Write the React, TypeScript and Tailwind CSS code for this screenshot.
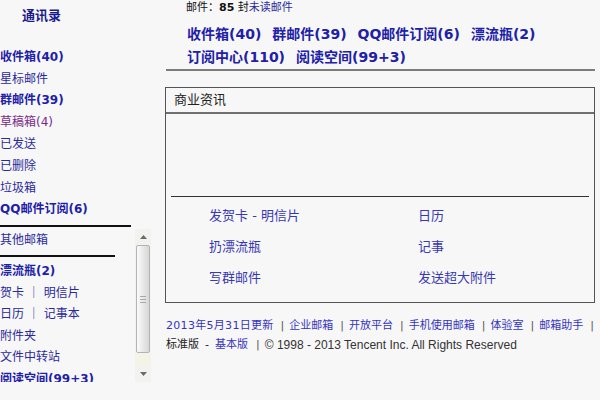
import React from "react";

const sideTop = [
  { label: "收件箱(40)", bold: true },
  { label: "星标邮件" },
  { label: "群邮件(39)", bold: true },
  { label: "草稿箱(4)", visited: true },
  { label: "已发送" },
  { label: "已删除" },
  { label: "垃圾箱" },
  { label: "QQ邮件订阅(6)", bold: true },
];

const sideBottom = [
  { label: "漂流瓶(2)", bold: true },
  { label: "贺卡 ｜ 明信片" },
  { label: "日历 ｜ 记事本" },
  { label: "附件夹" },
  { label: "文件中转站" },
  { label: "阅读空间(99+3)", bold: true },
];

const quickLinks = [
  ["发贺卡 - 明信片", "日历"],
  ["扔漂流瓶", "记事"],
  ["写群邮件", "发送超大附件"],
];

const footerLinks = ["企业邮箱", "开放平台", "手机使用邮箱", "体验室", "邮箱助手", "自助查询"];

function SideItem({ label, bold, visited }: { label: string; bold?: boolean; visited?: boolean }) {
  return (
    <div
      className={`flex items-center whitespace-nowrap text-[12px] ${
        bold ? "font-bold text-[#2020a8]" : visited ? "text-[#7a2a8a]" : "text-[#2a2a9c]"
      }`}
    >
      {label}
    </div>
  );
}

function Scrollbar() {
  return (
    <div className="ml-[2px] w-[16px] flex flex-col bg-[#f2f2ee]">
      <div className="h-[16px] flex items-center justify-center">
        <svg width="7" height="4" viewBox="0 0 7 4">
          <path d="M0 4 L3.5 0 L7 4 Z" fill="#6a6a6a" />
        </svg>
      </div>
      <div className="h-[108px] mx-[1px] rounded-[2px] border border-[#b4b4b4] bg-gradient-to-r from-[#fbfbfb] to-[#d6d6d6] flex flex-col items-center justify-center gap-[2px]">
        <div className="w-[6px] h-px bg-[#a8a8a8]" />
        <div className="w-[6px] h-px bg-[#a8a8a8]" />
        <div className="w-[6px] h-px bg-[#a8a8a8]" />
      </div>
      <div className="flex-1 bg-[#f4f4e6]" />
      <div className="h-[16px] flex items-center justify-center">
        <svg width="7" height="4" viewBox="0 0 7 4">
          <path d="M0 0 L3.5 4 L7 0 Z" fill="#6a6a6a" />
        </svg>
      </div>
    </div>
  );
}

export default function App() {
  return (
    <div className="w-[600px] h-[400px] overflow-hidden bg-[#f7f7f7] flex font-['DejaVu_Sans','Noto_Sans_CJK_SC',sans-serif]">
      {/* 左侧导航 */}
      <div className="w-[160px] shrink-0 flex flex-col">
        <div className="h-[32px] flex items-center pl-[22px] text-[13px] font-bold text-[#1b1b8c]">通讯录</div>
        <div className="mt-[14px] flex flex-col [&>div]:h-[21.8px]">
          {sideTop.map((it) => (
            <SideItem key={it.label} {...it} />
          ))}
        </div>
        <div className="mt-[5px] h-[2px] w-[131px] bg-[#111]" />
        <div className="mt-[2px] h-[153px] flex">
          <div className="w-[133px] overflow-hidden flex flex-col">
            <div className="h-[22px] shrink-0 flex items-center text-[12px] text-[#2a2a9c]">其他邮箱</div>
            <div className="mt-[4px] h-[2px] w-[115px] shrink-0 bg-[#111]" />
            <div className="mt-[3px] flex flex-col [&>div]:h-[21.5px] [&>div]:shrink-0">
              {sideBottom.map((it) => (
                <SideItem key={it.label} {...it} />
              ))}
            </div>
          </div>
          <Scrollbar />
        </div>
      </div>

      {/* 主区域 */}
      <div className="w-[435px] shrink-0 pl-[5px] flex flex-col">
        <div className="h-[16px] flex items-center pl-[21px] text-[11px] text-[#111] whitespace-nowrap">
          邮件：<span className="font-bold">85</span>&nbsp;封<span className="text-[#2a2a9c]">未读邮件</span>
        </div>
        <div className="mt-[6.5px] pl-[22px] flex flex-col text-[14px] font-bold text-[#2020a8] whitespace-nowrap">
          <div className="h-[23px] flex items-center gap-[11px]">
            <span>收件箱(40)</span>
            <span>群邮件(39)</span>
            <span>QQ邮件订阅(6)</span>
            <span>漂流瓶(2)</span>
          </div>
          <div className="h-[23px] flex items-center gap-[11px]">
            <span>订阅中心(110)</span>
            <span>阅读空间(99+3)</span>
          </div>
        </div>
        <div className="mt-[0.5px] ml-[1px] h-[2px] bg-[#7c7c7c]" />

        {/* 商业资讯 */}
        <div className="mt-[16px] h-[216px] border-[1.5px] border-[#555] flex flex-col">
          <div className="h-[26px] flex items-center pl-[8px] border-b-2 border-[#707070] text-[13px] text-[#222]">
            商业资讯
          </div>
          <div className="h-[82px]" />
          <div className="mx-[5px] h-px bg-[#333]" />
          <div className="pt-[3px] pl-[43px] grid grid-cols-[209px_1fr] text-[13px] text-[#3838b4]">
            {quickLinks.map(([a, b]) => (
              <React.Fragment key={a}>
                <div className="h-[31px] flex items-center">{a}</div>
                <div className="h-[31px] flex items-center">{b}</div>
              </React.Fragment>
            ))}
          </div>
        </div>

        {/* 页脚 */}
        <div className="mt-[13.5px] ml-[1px] h-[19px] flex items-center whitespace-nowrap text-[11px] text-[#3434c0]">
          <span className="tracking-[0.3px]">2013年5月31日更新</span>
          {footerLinks.map((l) => (
            <React.Fragment key={l}>
              <span className="ml-[7px] mr-[5px] text-[#555]">|</span>
              <span>{l}</span>
            </React.Fragment>
          ))}
        </div>
        <div className="ml-[1px] h-[19px] flex items-center whitespace-nowrap text-[11px] text-[#222]">
          <span>标准版</span>
          <span className="mx-[6px]">-</span>
          <span className="text-[#3434c0]">基本版</span>
          <span className="ml-[8px] mr-[5px] text-[#555]">|</span>
          <span className="font-['Liberation_Sans',sans-serif] text-[12px] text-[#333]">© 1998 - 2013 Tencent Inc. All Rights Reserved</span>
        </div>
      </div>
    </div>
  );
}
